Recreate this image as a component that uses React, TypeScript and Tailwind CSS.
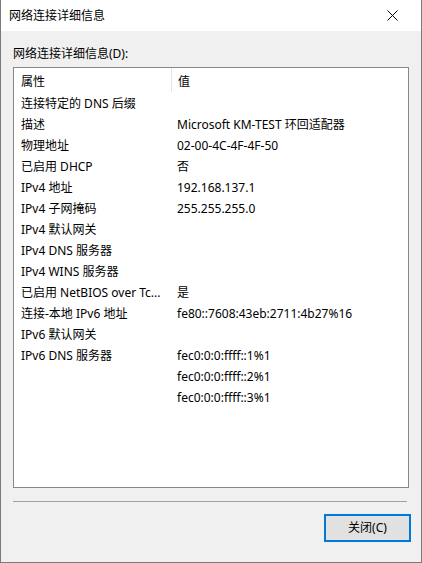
const rows: [string, string][] = [
  ["连接特定的 DNS 后缀", ""],
  ["描述", "Microsoft KM-TEST 环回适配器"],
  ["物理地址", "02-00-4C-4F-4F-50"],
  ["已启用 DHCP", "否"],
  ["IPv4 地址", "192.168.137.1"],
  ["IPv4 子网掩码", "255.255.255.0"],
  ["IPv4 默认网关", ""],
  ["IPv4 DNS 服务器", ""],
  ["IPv4 WINS 服务器", ""],
  ["已启用 NetBIOS over Tc...", "是"],
  ["连接-本地 IPv6 地址", "fe80::7608:43eb:2711:4b27%16"],
  ["IPv6 默认网关", ""],
  ["IPv6 DNS 服务器", "fec0:0:0:ffff::1%1"],
  ["", "fec0:0:0:ffff::2%1"],
  ["", "fec0:0:0:ffff::3%1"],
];

export default function App() {
  return (
    <div className="w-[422px] h-[563px] flex flex-col bg-[#f0f0f0] border-x border-b border-[#7a7a7a] text-[12px] text-black font-['Noto_Sans','Noto_Sans_CJK_SC',sans-serif] leading-[16px]">
      {/* title bar */}
      <div className="h-[31px] bg-white flex items-center justify-between pl-[8px] pr-[23px] shrink-0">
        <span>网络连接详细信息</span>
        <svg width="11" height="11" viewBox="0 0 11 11">
          <path d="M0.5 0.5 L10.5 10.5 M10.5 0.5 L0.5 10.5" stroke="#000" strokeWidth="1" />
        </svg>
      </div>

      <div className="px-[12px] pt-[15px]">
        <div>网络连接详细信息(D):</div>
        <div className="mt-[5px] w-[396px] h-[421px] bg-white border border-[#828790] flex flex-col">
          <div className="h-[24px] flex items-center shrink-0">
            <div className="w-[157px] pl-[7px] pt-[3px]">属性</div>
            <div className="w-px h-full bg-[#e5e5e5]" />
            <div className="pl-[6px] pt-[3px]">值</div>
          </div>
          {rows.map(([k, v], i) => (
            <div key={i} className="h-[21px] pt-[2px] flex items-center">
              <div className="w-[158px] pl-[7px] whitespace-nowrap overflow-hidden">{k}</div>
              <div className="pl-[5px] whitespace-nowrap">{v}</div>
            </div>
          ))}
        </div>
        <div className="mt-[13px] w-[394px] h-px bg-[#a0a0a0]" />
      </div>

      <div className="flex justify-end pr-[10px] mt-[12px]">
        <button className="w-[87px] h-[28px] bg-[#e1e1e1] border-2 border-[#0078d7] flex items-center justify-center">
          关闭(C)
        </button>
      </div>
    </div>
  );
}
